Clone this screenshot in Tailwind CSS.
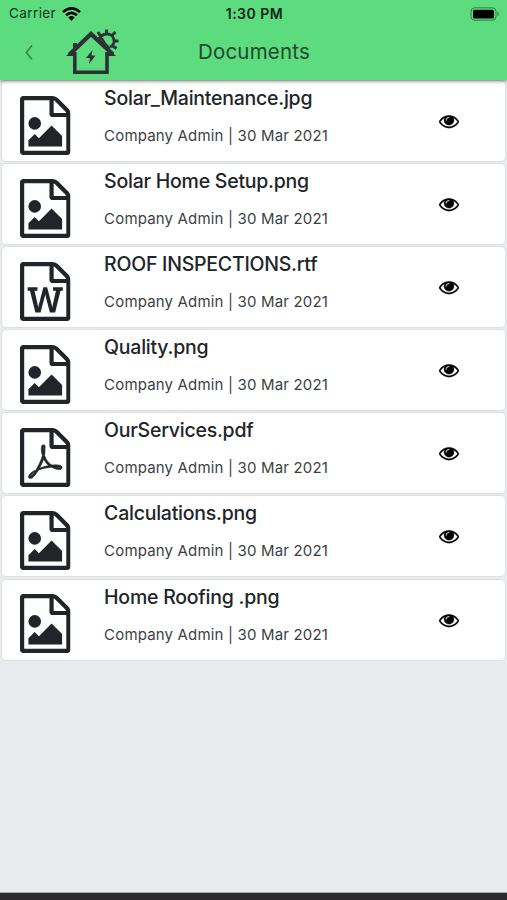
<!DOCTYPE html>
<html lang="en"><head><meta charset="utf-8"><title>Documents</title>
<script src="https://cdn.jsdelivr.net/npm/@tailwindcss/browser@4"></script></head>
<body class="w-[507px] h-[900px] overflow-hidden bg-[#e8ecef] font-['Inter','Liberation_Sans',sans-serif] flex flex-col">
<svg class="hidden">
<symbol id="page" viewBox="0 0 1536 1792"><path d="M1468 380q28 28 48 76t20 88v1152q0 40-28 68t-68 28h-1344q-40 0-68-28t-28-68v-1600q0-40 28-68t68-28h896q40 0 88 20t76 48zm-444-244v376h376q-10-29-22-41l-313-313q-12-12-41-22zm384 1528v-1024h-416q-40 0-68-28t-28-68v-416h-768v1536h1280z"/></symbol>
<symbol id="image" viewBox="0 0 1536 1792"><use href="#page" width="1536" height="1792"/><path d="M1280 1216v320h-1024v-192l192-192 128 128 384-384zM448 1024q-80 0-136-56t-56-136 56-136 136-56 136 56 56 136-56 136-136 56z"/></symbol>
<symbol id="word" viewBox="0 0 1536 1792"><use href="#page" width="1536" height="1792"/><path d="M233 768v107h70l164 661h159l128-485q7-20 10-46 2-16 2-24h4l3 24q1 3 3.5 20t5.5 26l128 485h159l164-661h70v-107h-300v107h90l-99 438q-5 20-7 46l-2 21h-4l-3-21q-1-5-4-21t-5-25l-144-545h-114l-144 545q-2 9-4.500 24.500t-3.500 21.500l-4 21h-4l-2-21q-2-26-7-46l-99-438h90v-107h-300z"/></symbol>
<symbol id="pdf" viewBox="0 0 1536 1792"><use href="#page" width="1536" height="1792"/><path stroke="#212529" stroke-width="18" d="M894 1071q33 26 84 56 59-7 117-7 147 0 177 49 16 22 2 52 0 1-1 2l-2 2v1q-6 38-71 38-48 0-115-20t-130-53q-221 24-392 83-153 262-242 262-15 0-28-7l-24-12q-1-1-6-5-10-10-6-36 9-40 56-91.500t132-96.500q14-9 23 6 2 2 2 4 52-85 107-197 68-136 104-262-24-82-30.500-159.500t6.500-127.500q11-40 42-40h22q23 0 35 15 18 21 9 68-2 6-4 8 1 3 1 8v30q-2 123-14 192 55 164 146 238zm-576 411q52-24 137-158-51 40-87.500 84t-49.500 74zm398-920q-15 42-2 132 1-7 7-44 0-3 7-43 1-4 4-8-1-1-1-2-1-2-1-3-1-22-13-36 0 1-1 2v2zm-124 661q135-54 284-81-2-1-13-9.500t-16-13.500q-76-67-127-176-27 86-83 197-30 56-45 83zm646-16q-24-24-140-24 76 28 124 28 14 0 18-1 0-1-2-3z"/></symbol>
<symbol id="eye" viewBox="0 0 1792 1792"><path stroke="#000" stroke-width="24" d="M1664 960q-152-236-381-353 61 104 61 225 0 185-131.500 316.500t-316.500 131.500-316.500-131.500-131.500-316.500q0-121 61-225-229 117-381 353 133 205 333.500 326.500t434.500 121.500 434.500-121.500 333.500-326.500zm-720-384q0-20-14-34t-34-14q-125 0-214.500 89.500t-89.500 214.500q0 20 14 34t34 14 34-14 14-34q0-86 61-147t147-61q20 0 34-14t14-34zm848 384q0 34-20 69-140 230-376.500 368.500t-499.500 138.500-499.500-139-376.500-368q-20-35-20-69t20-69q140-229 376.500-368t499.500-139 499.500 139 376.500 368q20 35 20 69z"/></symbol>
</svg>
<header class="relative z-10 h-20 shrink-0 bg-[#5cdb7f] shadow-[0_1px_4px_rgba(0,0,0,0.5)]">
 <div class="grid grid-cols-3 h-[27px] items-center pl-[9px] pr-[7px] text-[#10351c]">
  <div class="flex items-center gap-[6px]"><span class="text-[13.5px] tracking-[0.4px]">Carrier</span>
   <svg class="w-[19px] h-[14px]" viewBox="0 0 19 14"><g fill="none" stroke="#000" stroke-width="2.500"><path d="M1 5.100Q9.500-2.300 18 5.100"/><path d="M4.100 8.200Q9.500 3.500 14.900 8.200"/></g><path d="M6.300 10.400Q9.500 7.700 12.700 10.400L9.500 13.700Z"/></svg></div>
  <span class="text-center text-[14px] tracking-[0.5px] font-semibold whitespace-nowrap text-[#0a2612] pb-px">1:30 PM</span>
  <svg class="justify-self-end w-[30px] h-[14px]" viewBox="0 0 30 14"><rect x="1" y=".8" width="25" height="12.400" rx="3.500" fill="none" stroke="#2f7e46"/><rect x="3" y="2.700" width="21" height="8.700" rx="1.500"/><path d="M27.500 4.500Q30 7 27.500 9.500Z" fill="#2f7e46"/></svg>
 </div>
 <div class="grid grid-cols-3 h-[53px] items-center">
  <div class="flex h-full"><svg class="w-[60px] h-[53px]" viewBox="0 0 60 53"><path d="M32 18.500L26.300 25.500L32 32.500" fill="none" stroke="#37834d" stroke-width="1.500"/></svg>
   <svg class="w-[65px] h-[53px]" viewBox="60 27 65 53"><g fill="none" stroke="#2d3036"><path d="M74.800 52V72.300H107V52" stroke-width="3.600"/><path d="M69.500 54.500L91 34L113 54.500" stroke-width="4.200"/><path d="M98.500 40.500Q101 34 107 34A6.800 6.800 0 0 1 110 47" stroke-width="2.800"/><path d="M100.500 36L97.800 32M106.500 34V29.500M111.500 36L115.500 32M113 41H118.500M112 45.500L116.500 48.500" stroke-width="3"/></g><path d="M73 43h4v6l-4 4zM66 56l7-7v7zM108 56v-7l8 7zM99 38l4 0 3 5 4 4v3zM92.500 50L86 58h4l-1 6 6.500-8.500h-4z" fill="#2d3036"/></svg></div>
  <h1 class="text-center text-[20.500px] text-[#24472e] whitespace-nowrap tracking-[0.2px] pb-[3px] pl-px">Documents</h1>
 </div>
</header>
<main id="list" class="flex flex-col gap-[1.100px] px-px"></main>
<footer class="mt-auto h-[8px] shrink-0 bg-[#2b2b30] border-t border-[#aaa9ad]"></footer>
<template id="row"><article class="flex h-[82px] shrink-0 rounded-[5px] border border-[#dfe0e1] bg-white">
 <svg class="w-[50.500px] h-[59px] ml-[18.300px] mt-[14.600px] shrink-0 fill-[#212529]"><use/></svg>
 <div class="ml-[33.300px] w-[335.400px] flex flex-col whitespace-nowrap"><h2 class="mt-[5px] h-[24px] leading-[24px] text-[19.500px] tracking-[-0.24px] font-medium text-[#212529]"><span></span></h2><p class="mt-[15px] leading-[22px] text-[15px] tracking-[0.17px] text-[#3c3f43]"><span>Company Admin | 30 Mar 2021</span></p></div>
 <svg class="w-5 h-5 mt-[30px]"><use href="#eye"/></svg>
</article></template>
<script>
const files=[["Solar_Maintenance.jpg","image"],["Solar Home Setup.png","image"],["ROOF INSPECTIONS.rtf","word"],["Quality.png","image"],["OurServices.pdf","pdf"],["Calculations.png","image"],["Home Roofing .png","image"]];
for(const [name,type] of files){const r=document.getElementById("row").content.cloneNode(true);r.querySelector("use").setAttribute("href","#"+type);r.querySelector("h2 span").textContent=name;document.getElementById("list").append(r)}
</script>
</body></html>
